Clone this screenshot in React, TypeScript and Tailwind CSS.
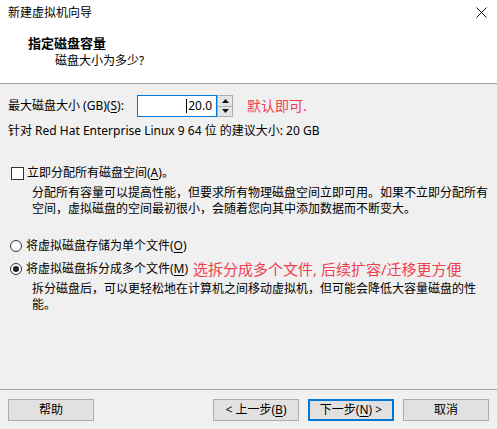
import React from 'react'

const font = "font-['Noto_Sans','Noto_Sans_CJK_SC',sans-serif]"

function Btn({ children, primary }: { children: React.ReactNode; primary?: boolean }) {
  return (
    <button
      className={
        'flex h-[22px] w-[86px] items-center justify-center bg-[#e1e1e1] text-[12px] leading-none text-black ' +
        (primary ? 'border-2 border-[#0078d7]' : 'border border-[#adadad]')
      }
    >
      {children}
    </button>
  )
}

function U({ children }: { children: React.ReactNode }) {
  return <span className="underline underline-offset-2">{children}</span>
}

export default function App() {
  return (
    <div className={`flex h-[429px] w-[497px] flex-col bg-[#f0f0f0] text-[12px] text-black ${font}`}>
      {/* header */}
      <div className="h-[84px] border-b border-[#a0a0a0] bg-white">
        <div className="flex h-[26px] items-center justify-between pl-2 pr-[10px]">
          <span className="leading-none">新建虚拟机向导</span>
          <svg width="11" height="11" viewBox="0 0 11 11" className="mb-[1px]">
            <path d="M0.5 0.5L10.5 10.5M10.5 0.5L0.5 10.5" stroke="#111" strokeWidth="1" />
          </svg>
        </div>
        <div className="mt-[9px] pl-[28px] text-[13px] font-bold leading-[16px]">指定磁盘容量</div>
        <div className="mt-[2px] pl-[55px] leading-[16px]">磁盘大小为多少?</div>
      </div>

      {/* body */}
      <div className="flex flex-1 flex-col px-2">
        <div className="mt-[11px] flex h-[22px] items-center">
          <span className="w-[129px] leading-none">
            最大磁盘大小 (GB)(<U>S</U>):
          </span>
          <div className="flex h-[22px] w-[80px] items-center justify-end border border-[#0078d7] bg-white pr-[4px]">
            <span className="mr-[1px] h-[14px] w-[1px] bg-black" />
            <span className="leading-none">20.0</span>
          </div>
          <div className="flex h-[22px] w-[16px] flex-col border border-[#adadad] bg-[#f0f0f0]">
            <div className="flex flex-1 items-center justify-center border-b border-[#adadad] bg-[#e5e5e5]">
              <svg width="7" height="4" viewBox="0 0 7 4">
                <path d="M3.5 0L7 4H0Z" fill="#111" />
              </svg>
            </div>
            <div className="flex flex-1 items-center justify-center bg-[#e5e5e5]">
              <svg width="7" height="4" viewBox="0 0 7 4">
                <path d="M0 0H7L3.5 4Z" fill="#111" />
              </svg>
            </div>
          </div>
          <span className="ml-[14px] text-[14px] leading-none text-[#f0404f]">默认即可.</span>
        </div>

        <div className="mt-[6px] leading-[16px]">
          针对 Red Hat Enterprise Linux 9 64 位 的建议大小: 20 GB
        </div>

        <div className="mt-[26px] flex h-[16px] items-center">
          <span className="ml-[3px] mr-[3px] h-[13px] w-[13px] border border-[#333] bg-white" />
          <span className="leading-none">
            立即分配所有磁盘空间(<U>A</U>)。
          </span>
        </div>
        <div className="mt-[4px] pl-[24px] leading-[16px]">
          分配所有容量可以提高性能，但要求所有物理磁盘空间立即可用。如果不立即分配所有空间，虚拟磁盘的空间最初很小，会随着您向其中添加数据而不断变大。
        </div>

        <div className="mt-[21px] flex h-[16px] items-center">
          <span className="ml-[2px] mr-[4px] h-[12px] w-[12px] rounded-full border border-[#333] bg-white" />
          <span className="leading-none">
            将虚拟磁盘存储为单个文件(<U>O</U>)
          </span>
        </div>
        <div className="mt-[7px] flex h-[16px] items-center">
          <span className="ml-[2px] mr-[4px] flex h-[12px] w-[12px] items-center justify-center rounded-full border border-[#333] bg-white">
            <span className="h-[6px] w-[6px] rounded-full bg-[#222]" />
          </span>
          <span className="leading-none">
            将虚拟磁盘拆分成多个文件(<U>M</U>)
          </span>
          <span className="ml-[5px] text-[15px] leading-none text-[#f0404f]">选拆分成多个文件, 后续扩容/迁移更方便</span>
        </div>
        <div className="mt-[4px] pl-[24px] pr-[8px] leading-[16px]">
          拆分磁盘后，可以更轻松地在计算机之间移动虚拟机，但可能会降低大容量磁盘的性能。
        </div>
      </div>

      {/* footer */}
      <div className="h-[40px] border-t border-[#a0a0a0]">
        <div className="mt-[9px] flex px-2">
          <Btn>帮助</Btn>
          <div className="ml-auto flex gap-[9px]">
            <Btn>
              &lt; 上一步(<U>B</U>)
            </Btn>
            <Btn primary>
              下一步(<U>N</U>) &gt;
            </Btn>
            <Btn>取消</Btn>
          </div>
        </div>
      </div>
    </div>
  )
}
